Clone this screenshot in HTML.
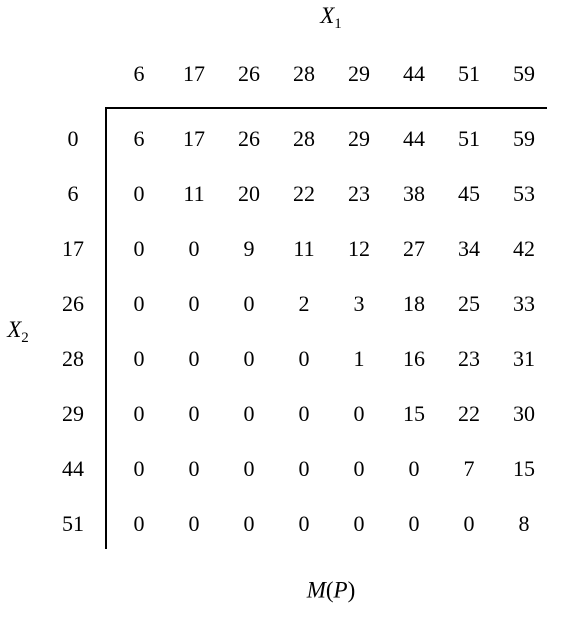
<!DOCTYPE html>
<html><head><style>
body{margin:0;width:563px;height:620px;background:#fff;position:relative;font-family:"Liberation Serif",serif;font-size:22px;color:#000;overflow:hidden}
.t{position:absolute;transform:translate(-50%,-50%);white-space:nowrap;line-height:1}
.l{font-size:23px}
i{font-style:italic}
sub{font-size:15px;vertical-align:-5px;font-style:normal}
</style></head><body>
<div style="position:absolute;left:105px;top:107px;width:442px;height:2px;background:#000"></div>
<div style="position:absolute;left:105px;top:107px;width:2px;height:442px;background:#000"></div>
<div class="t l" style="left:331px;top:18px"><i>X</i><sub>1</sub></div>
<div class="t l" style="left:18px;top:332px"><i>X</i><sub>2</sub></div>
<div class="t l" style="left:331px;top:590px"><i>M</i>(<i>P</i>)</div>
<div id="g"></div>
<script>
var cols=[6,17,26,28,29,44,51,59],rows=[0,6,17,26,28,29,44,51];
var cx=[139,194,249,304,359,414,469,524],h='';
for(var j=0;j<8;j++)h+='<div class="t" style="left:'+cx[j]+'px;top:74px">'+cols[j]+'</div>';
for(var i=0;i<8;i++){var y=139+55*i;
h+='<div class="t" style="left:73px;top:'+y+'px">'+rows[i]+'</div>';
for(var j=0;j<8;j++){var v=Math.max(0,cols[j]-rows[i]);h+='<div class="t" style="left:'+cx[j]+'px;top:'+y+'px">'+v+'</div>';}}
document.getElementById('g').innerHTML=h;
</script>
</body></html>
